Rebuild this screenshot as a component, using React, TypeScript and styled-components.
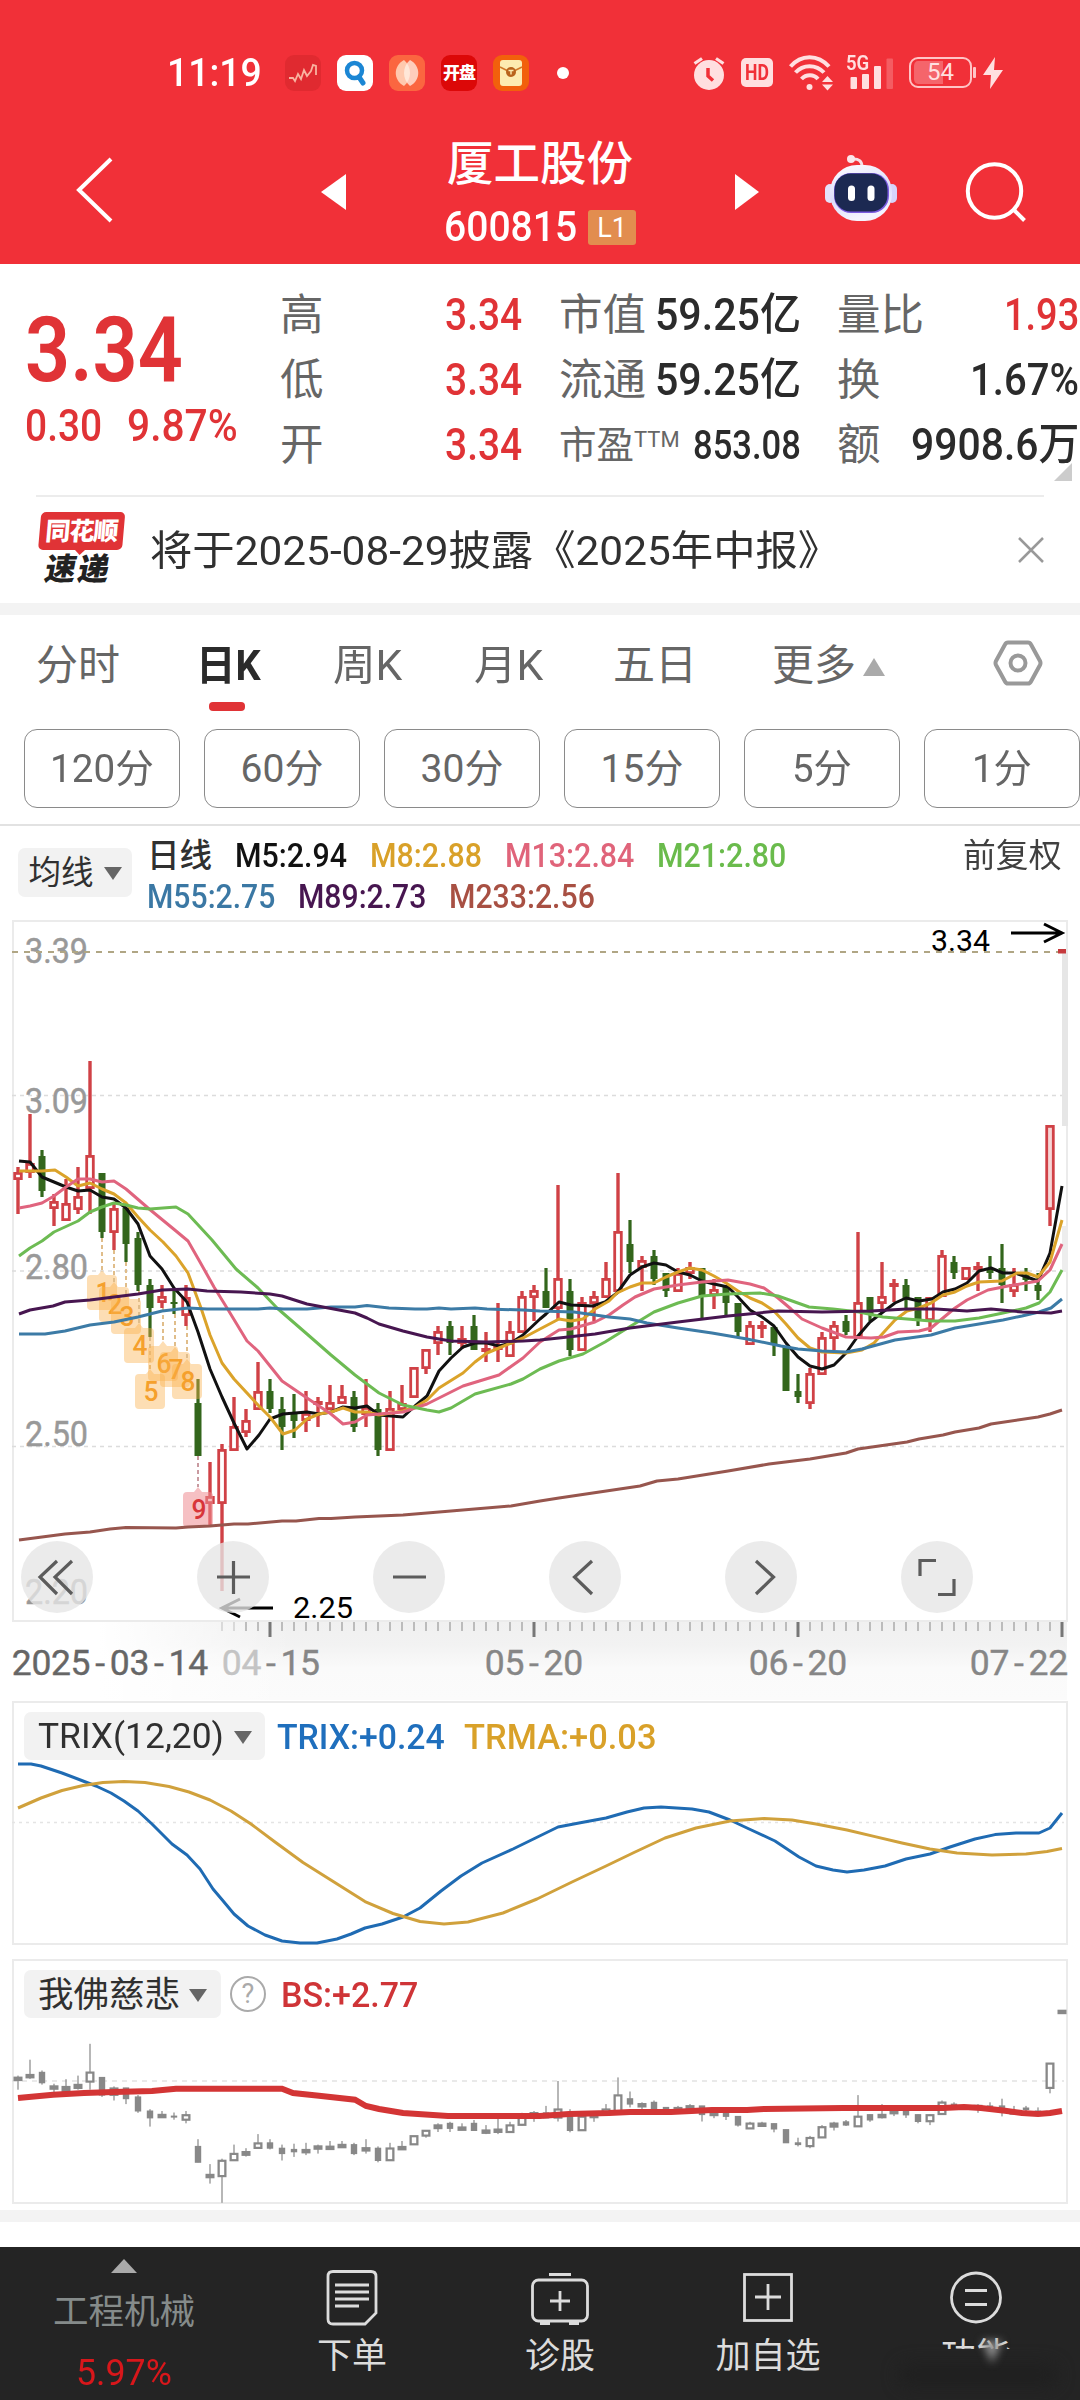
import React, { useLayoutEffect, useRef, useState } from "react";
import styled, { createGlobalStyle } from "styled-components";

const FONT = `Roboto, "Noto Sans CJK SC", sans-serif`;
const RED = "#e03336";

const GlobalStyle = createGlobalStyle`
  * { box-sizing: border-box; }
  html, body { margin: 0; padding: 0; background: #fff; }
  body { width: 1080px; font-family: ${FONT}; color: #303030; overflow-x: hidden; }
  svg { display: block; }
`;

/* ---------- text squeezed to a fixed width, like a condensed DIN face ---------- */

const FitBox = styled.span<{ $w: number }>`
  display: block;
  flex: none;
  width: ${(p) => p.$w}px;
  white-space: nowrap;
`;
const FitInner = styled.span`
  display: inline-block;
  transform-origin: 0 50%;
`;

function Fit({ w, children, className }: { w: number; children: React.ReactNode; className?: string }) {
  const ref = useRef<HTMLSpanElement>(null);
  const [scale, setScale] = useState(1);
  useLayoutEffect(() => {
    if (ref.current) setScale(w / ref.current.offsetWidth);
  }, [w]);
  return (
    <FitBox $w={w} className={className}>
      <FitInner ref={ref} style={{ transform: `scaleX(${scale})` }}>
        {children}
      </FitInner>
    </FitBox>
  );
}

/* ---------- page ---------- */

const Page = styled.main`
  width: 1080px;
  height: 2400px;
  display: flex;
  flex-direction: column;
  background: #fff;
  overflow: hidden;
`;

const Header = styled.header`
  height: 264px;
  flex: none;
  background: #f13038;
  color: #fff;
  display: flex;
  flex-direction: column;
`;
const StatusBar = styled.div`
  height: 98px;
  padding: 47px 77px 0 167px;
  display: flex;
  align-items: center;
`;
const Clock = styled(Fit)`
  font-size: 38.5px;
  line-height: 48px;
  font-weight: 500;
`;
const AppIcons = styled.div`
  display: flex;
  gap: 16px;
  margin-left: 23px;
`;
const AppIcon = styled.div<{ $bg: string }>`
  width: 36px;
  height: 36px;
  border-radius: 9px;
  background: ${(p) => p.$bg};
  display: flex;
  align-items: center;
  justify-content: center;
  font-size: 17px;
  font-weight: 900;
  line-height: 36px;
  letter-spacing: -1px;
`;
const MoreDot = styled.i`
  width: 12px;
  height: 12px;
  border-radius: 50%;
  background: #fff;
  margin-left: 28px;
`;
const SystemIcons = styled.div`
  margin-left: auto;
  display: flex;
  align-items: center;
  color: #ffdfe0;
`;
const HdBadge = styled.span`
  width: 32px;
  height: 29px;
  margin: 0 16px;
  border-radius: 5px;
  background: #ffdfe0;
  color: #f13038;
  font-size: 22px;
  font-weight: 700;
  line-height: 29px;
  padding-left: 4px;
`;
const Signal = styled.div`
  position: relative;
  width: 48px;
  height: 36px;
  margin-left: 13px;
`;
const SignalLabel = styled(Fit)`
  position: absolute;
  left: 0;
  top: -2px;
  font-size: 21px;
  font-weight: 600;
  line-height: 20px;
`;
const Battery = styled.span`
  width: 63px;
  height: 31px;
  margin-left: 15px;
  border: 2.5px solid #ffc4c6;
  border-radius: 9px;
  background: linear-gradient(to right, #f5656b 54%, transparent 54%) content-box;
  padding: 2px 3px;
  text-align: center;
  font-size: 24px;
  font-weight: 400;
  line-height: 23px;
`;
const BatteryTip = styled.i`
  width: 3px;
  height: 11px;
  margin: 0 7px 0 1px;
  border-radius: 1px;
  background: #ffc4c6;
`;

const TitleBar = styled.div`
  height: 166px;
  padding: 22px 53px 0 76px;
  display: flex;
  align-items: flex-start;
`;
const BackSlot = styled.div`
  padding-top: 36px;
  width: 244px;
`;
const ArrowSlot = styled.div`
  padding-top: 53px;
  width: 26px;
`;
const TitleBlock = styled.div`
  width: 388px;
  display: flex;
  flex-direction: column;
  align-items: center;
`;
const StockName = styled.h1`
  margin: 0;
  font-size: 46.5px;
  font-weight: 500;
  line-height: 88px;
`;
const CodeRow = styled.div`
  display: flex;
  align-items: center;
  gap: 11px;
  height: 44px;
  margin-top: -3px;
`;
const Code = styled(Fit)`
  font-size: 42px;
  line-height: 44px;
  font-weight: 500;
`;
const LevelBadge = styled.span`
  width: 48px;
  height: 35px;
  border-radius: 3px;
  background: #e28d4f;
  font-size: 27px;
  line-height: 36px;
  text-align: center;
`;
const RobotSlot = styled.div`
  margin-left: 65px;
  padding-top: 35px;
`;
const SearchSlot = styled.div`
  margin-left: auto;
  padding-top: 39px;
`;

/* ---------- quote ---------- */

const Quote = styled.section`
  position: relative;
  height: 231px;
  flex: none;
  display: flex;
  padding-top: 19px;
`;
const PriceBlock = styled.div`
  width: 280px;
  padding: 17px 0 0 25px;
  color: ${RED};
`;
const Price = styled(Fit)`
  font-size: 91px;
  line-height: 100px;
  font-weight: 600;
`;
const ChangeRow = styled.div`
  display: flex;
  gap: 25px;
  margin-top: 3px;
  font-size: 44px;
  line-height: 46px;
  font-weight: 500;
`;
const StatColumn = styled.div<{ $gap: number }>`
  width: 242px;
  margin-right: ${(p) => p.$gap}px;
`;
const StatRow = styled.div`
  height: 65px;
  display: flex;
  align-items: center;
  justify-content: space-between;
  white-space: nowrap;
  line-height: 65px;
`;
const StatLabel = styled.span<{ $size?: number }>`
  font-size: ${(p) => p.$size ?? 43.5}px;
  color: #666;
  sup {
    font-size: 22px;
    line-height: 0;
    vertical-align: 11px;
    font-weight: 400;
  }
`;
const StatValue = styled(Fit)<{ $red?: boolean; $size?: number }>`
  font-size: ${(p) => p.$size ?? 44.5}px;
  font-weight: 500;
  color: ${(p) => (p.$red ? RED : "#2b2b2b")};
`;
const Corner = styled.i`
  position: absolute;
  left: 1054px;
  top: 199px;
  border-left: 18px solid transparent;
  border-bottom: 18px solid #ccc;
`;

const Notice = styled.section`
  height: 108px;
  flex: none;
  margin: 0 36px;
  border-top: 2px solid #ececec;
  display: flex;
  align-items: center;
`;
const NewsLogo = styled.div`
  width: 88px;
  height: 76px;
  display: flex;
  flex-direction: column;
  align-items: center;
  transform: skewX(-5deg);
`;
const NewsTop = styled.span`
  position: relative;
  width: 84px;
  height: 38px;
  border-radius: 5px;
  background: ${RED};
  color: #fff;
  font-size: 25px;
  font-weight: 900;
  letter-spacing: -1px;
  line-height: 39px;
  text-align: center;
  &::after {
    content: "";
    position: absolute;
    left: 36px;
    top: 37px;
    border: 6px solid transparent;
    border-top-color: ${RED};
  }
`;
const NewsBottom = styled.span`
  font-size: 31px;
  font-weight: 900;
  line-height: 40px;
  letter-spacing: 2px;
  color: #222;
  transform: skewX(-6deg);
`;
const NoticeText = styled(Fit)`
  margin-left: 26px;
  font-size: 41px;
  line-height: 58px;
  padding-top: 2px;
  color: #303030;
`;
const CloseSlot = styled.div`
  margin-left: auto;
`;
const Band = styled.div`
  height: 12px;
  flex: none;
  background: #f3f3f3;
`;

/* ---------- tabs ---------- */

const Tabs = styled.nav`
  height: 105px;
  flex: none;
  padding: 16px 37px 0 36px;
  display: grid;
  grid-template-columns: 160px 137px 141px 139px 159px 1fr 50px;
  align-items: start;
`;
const TabItem = styled.div<{ $active?: boolean }>`
  font-size: 42px;
  line-height: 69px;
  font-weight: ${(p) => (p.$active ? 700 : 400)};
  color: ${(p) => (p.$active ? "#2b2b2b" : "#666")};
`;
const TabMark = styled.i`
  display: block;
  width: 36px;
  height: 9px;
  margin: 2px 0 0 13px;
  border-radius: 4px;
  background: ${RED};
`;
const MoreTriangle = styled.i`
  display: inline-block;
  margin: 0 0 4px 7px;
  border: 11px solid transparent;
  border-top: 0;
  border-bottom: 18px solid #aaa;
`;
const SettingSlot = styled.div`
  padding-top: 9px;
`;
const Periods = styled.div`
  height: 106px;
  flex: none;
  padding: 9px 0 0 24px;
  display: flex;
  gap: 24px;
  border-bottom: 2px solid #e2e2e2;
`;
const Period = styled.button`
  width: 156px;
  height: 79px;
  flex: none;
  padding: 0;
  border: 1.5px solid #8a8a8a;
  border-radius: 13px;
  background: #fff;
  font: 400 39px/79px ${FONT};
  color: #666;
  display: flex;
  justify-content: center;
`;

/* ---------- legend ---------- */

const Legend = styled.section`
  height: 94px;
  flex: none;
  padding-left: 18px;
  display: flex;
`;
const Chip = styled.div<{ $w: number; $h: number; $size: number; $gap?: number }>`
  width: ${(p) => p.$w}px;
  height: ${(p) => p.$h}px;
  flex: none;
  border-radius: 7px;
  background: #f2f2f2;
  display: flex;
  align-items: center;
  justify-content: center;
  gap: ${(p) => p.$gap ?? 10}px;
  font-size: ${(p) => p.$size}px;
  line-height: ${(p) => p.$h}px;
  padding-top: 2px;
  white-space: nowrap;
  color: #303030;
`;
const ChipSlot = styled.div`
  padding-top: 22px;
  width: 129px;
`;
const Down = styled.i`
  border: 9px solid transparent;
  border-bottom: 0;
  border-top: 13px solid #666;
`;
const LegendRows = styled.div`
  padding-top: 10px;
  flex: 1;
`;
const LegendRow = styled.div`
  height: 41px;
  display: flex;
  gap: 23px;
  font-size: 32.5px;
  font-weight: 500;
  line-height: 41px;
`;
const LegendItem = styled(Fit)<{ $c: string }>`
  color: ${(p) => p.$c};
`;
const Adjust = styled(Fit)`
  margin: 0 18px 0 auto;
  font-weight: 400;
  color: #404040;
`;

/* ---------- charts ---------- */

const ChartArea = styled.section`
  position: relative;
  height: 781px;
  flex: none;
`;
const Controls = styled.div`
  position: absolute;
  left: 21px;
  top: 621px;
  display: flex;
  gap: 104px;
`;
const RoundButton = styled.button`
  width: 72px;
  height: 72px;
  padding: 0;
  border: 0;
  border-radius: 50%;
  background: rgba(230, 230, 230, 0.78);
  display: flex;
  align-items: center;
  justify-content: center;
`;
const Panel = styled.section<{ $h: number }>`
  position: relative;
  height: ${(p) => p.$h}px;
  flex: none;
  margin: 0 12px;
  border: 2px solid #ebebeb;
`;
const PanelHead = styled.div`
  position: relative;
  z-index: 1;
  display: flex;
  align-items: center;
  padding: 9px 0 0 10px;
  height: 57px;
`;
const PanelValue = styled(Fit)<{ $c: string; $ml: number }>`
  color: ${(p) => p.$c};
  margin-left: ${(p) => p.$ml}px;
  padding-top: 2px;
  font-size: 35px;
  line-height: 47px;
  font-weight: 500;
`;
const Plot = styled.svg`
  position: absolute;
  left: -14px;
  top: -2px;
`;
const Help = styled.span`
  width: 36px;
  height: 36px;
  margin-left: 9px;
  border: 2.5px solid #aaa;
  border-radius: 50%;
  color: #aaa;
  font-size: 27px;
  line-height: 32px;
  text-align: center;
`;
const Spacer = styled.div<{ $h: number }>`
  height: ${(p) => p.$h}px;
  flex: none;
`;

/* ---------- bottom bar ---------- */

const BottomBar = styled.footer`
  height: 153px;
  flex: none;
  background: #242424;
  display: grid;
  grid-template-columns: 248px repeat(4, 208px);
  position: relative;
`;
const Sector = styled.div`
  display: flex;
  flex-direction: column;
  align-items: center;
  padding-top: 12px;
`;
const UpMark = styled.i`
  border: 13px solid transparent;
  border-top: 0;
  border-bottom: 14px solid #aaa;
`;
const SectorName = styled.span`
  margin-top: 15px;
  font-size: 35.5px;
  line-height: 48px;
  color: #858b8a;
`;
const SectorChange = styled(Fit)`
  margin-top: 13px;
  font-size: 36.5px;
  line-height: 48px;
  color: #d8171b;
`;
const Action = styled.div`
  display: flex;
  flex-direction: column;
  align-items: center;
  padding-top: 20px;
`;
const ActionLabel = styled.span`
  margin-top: 4px;
  font-size: 35px;
  line-height: 48px;
  color: #dcdcdc;
`;
const Smudge = styled.div`
  position: absolute;
  left: 880px;
  top: 102px;
  width: 196px;
  height: 48px;
  background: #242424;
  &::before {
    content: "";
    position: absolute;
    left: 18px;
    top: 14px;
    width: 160px;
    height: 24px;
    border-radius: 12px;
    background: #202020;
    filter: blur(8px);
  }
  &::after {
    content: "";
    position: absolute;
    left: 102px;
    top: -8px;
    border: 10px solid transparent;
    border-bottom: 0;
    border-top: 22px solid #8f8f8f;
    filter: blur(4px);
  }
`;

/* ---------- data: rising flag, high, body top, body bottom, low (pixel rows) ---------- */

type Candle = [0 | 1, number, number, number, number];
const candles: Candle[] = [
  [1, 1167, 1172, 1180, 1214], [1, 1114, 1163, 1173, 1178], [0, 1150, 1156, 1191, 1197], [1, 1194, 1201, 1209, 1226],
  [1, 1179, 1203, 1221, 1221], [1, 1167, 1196, 1210, 1214], [1, 1061, 1155, 1189, 1214], [0, 1173, 1173, 1232, 1238],
  [1, 1203, 1208, 1233, 1250], [0, 1208, 1208, 1244, 1262], [0, 1232, 1238, 1285, 1291], [0, 1279, 1285, 1308, 1337],
  [1, 1285, 1296, 1303, 1308], [0, 1290, 1302, 1304, 1314], [1, 1285, 1297, 1316, 1326], [0, 1379, 1403, 1456, 1456],
  [1, 1462, 1496, 1504, 1527], [1, 1444, 1449, 1504, 1591], [1, 1397, 1426, 1451, 1451], [1, 1409, 1420, 1433, 1437],
  [1, 1362, 1391, 1410, 1410], [0, 1379, 1391, 1409, 1413], [0, 1397, 1409, 1427, 1450], [0, 1394, 1413, 1421, 1438],
  [1, 1391, 1413, 1421, 1432], [1, 1397, 1401, 1405, 1427], [1, 1385, 1402, 1410, 1410], [1, 1385, 1396, 1404, 1404],
  [0, 1391, 1397, 1427, 1432], [1, 1379, 1407, 1415, 1427], [0, 1403, 1409, 1450, 1456], [1, 1391, 1408, 1451, 1451],
  [1, 1385, 1403, 1410, 1410], [1, 1368, 1367, 1398, 1398], [1, 1350, 1349, 1369, 1374], [1, 1326, 1331, 1344, 1355],
  [0, 1321, 1326, 1343, 1355], [1, 1326, 1338, 1344, 1349], [0, 1315, 1326, 1350, 1350], [1, 1332, 1348, 1352, 1362],
  [1, 1303, 1345, 1350, 1362], [1, 1321, 1331, 1357, 1357], [1, 1291, 1296, 1333, 1333], [1, 1285, 1290, 1298, 1321],
  [0, 1268, 1291, 1308, 1308], [1, 1185, 1278, 1309, 1320], [0, 1279, 1291, 1350, 1356], [1, 1297, 1302, 1351, 1351],
  [1, 1291, 1296, 1304, 1321], [1, 1262, 1278, 1298, 1298], [1, 1173, 1231, 1292, 1292], [0, 1220, 1244, 1262, 1273],
  [1, 1256, 1260, 1268, 1291], [0, 1250, 1256, 1279, 1285], [0, 1273, 1273, 1291, 1297], [1, 1268, 1273, 1292, 1292],
  [1, 1262, 1267, 1274, 1279], [0, 1268, 1268, 1297, 1320], [1, 1279, 1289, 1296, 1309], [0, 1285, 1285, 1303, 1315],
  [0, 1303, 1303, 1332, 1337], [1, 1321, 1325, 1345, 1345], [1, 1321, 1325, 1329, 1338], [0, 1327, 1327, 1345, 1356],
  [0, 1347, 1347, 1391, 1391], [0, 1374, 1391, 1397, 1403], [1, 1368, 1373, 1404, 1409], [1, 1332, 1337, 1375, 1375],
  [1, 1321, 1325, 1339, 1350], [0, 1315, 1321, 1332, 1335], [1, 1232, 1302, 1338, 1338], [0, 1297, 1297, 1315, 1321],
  [1, 1262, 1296, 1304, 1310], [1, 1279, 1283, 1287, 1302], [0, 1279, 1285, 1298, 1308], [0, 1297, 1297, 1320, 1326],
  [1, 1297, 1297, 1321, 1332], [1, 1250, 1255, 1297, 1297], [0, 1256, 1262, 1273, 1279], [1, 1267, 1267, 1280, 1280],
  [1, 1262, 1266, 1270, 1291], [0, 1256, 1268, 1273, 1279], [0, 1244, 1268, 1285, 1303], [1, 1268, 1284, 1292, 1297],
  [0, 1268, 1275, 1280, 1291], [0, 1273, 1285, 1291, 1300], [1, 1125, 1125, 1210, 1226], [1, 949, 949, 953, 953],
];

const lines: [string, string][] = [
  ["#97564e", "19,1540 65,1534 90,1532 110,1529 126,1527.5 176,1528 188,1527 210,1526 234,1524 248,1524 282,1521 296,1521 319,1518.5 331,1518.5 355,1517 403,1515 451,1511 511,1506 540,1501 559,1498 640,1486 657,1481 678,1479 728,1471 769,1464 810,1459 846,1453 858,1449 907,1442 919,1439 943,1435 955,1432 979,1428 991,1424 1038,1417 1050,1414 1062,1410"],
  ["#111", "19,1161 30,1162 42,1177 54,1182 66,1187 78,1191 90,1190 102,1197 114,1199 126,1208 138,1224 150,1256 162,1269 174,1288 187,1302 198,1332 210,1369 222,1397 234,1423 247,1449 259,1435 270,1419 283,1414 307,1412 319,1414 331,1412 343,1407 355,1408 367,1406 379,1415 403,1417 415,1406 427,1396 439,1371 451,1358 463,1347 475,1343 487,1343 499,1346 511,1343 523,1335 540,1319 546,1314 559,1302 571,1305 593,1306 605,1302 617,1293 630,1275 642,1267 654,1263 666,1265 678,1272 690,1275 702,1281 714,1284 728,1287 738,1297 750,1310 762,1317 774,1326 786,1343 798,1357 810,1366 822,1369 834,1365 846,1353 858,1336 870,1322 883,1312 895,1303 906,1298 919,1301 932,1299 943,1292 955,1289 967,1283 979,1271 991,1268 1003,1273 1015,1273 1027,1277 1038,1281 1050,1253 1062,1186"],
  ["#dba32a", "19,1171 42,1171 55,1170 66,1177 78,1186 90,1183 102,1189 114,1194 126,1203 138,1217 150,1230 163,1242 176,1256 188,1273 201,1308 210,1335 222,1363 234,1379 258,1405 270,1417 283,1434 295,1430 307,1419 319,1414 331,1412 343,1408 355,1412 367,1412 379,1415 403,1411 415,1407 427,1400 439,1388 463,1373 475,1362 487,1353 499,1348 523,1338 540,1329 559,1319 571,1321 583,1319 595,1309 609,1301 617,1293 630,1287 642,1283 654,1283 666,1277 678,1272 690,1268 702,1270 714,1276 726,1283 738,1291 750,1298 762,1303 774,1311 786,1324 798,1338 810,1348 822,1352 846,1353 862,1350 874,1343 884,1332 895,1320 907,1311 919,1308 931,1303 943,1295 955,1292 967,1286 979,1282 1002,1281 1017,1273 1027,1273 1038,1277 1050,1262 1062,1220"],
  ["#e0647e", "19,1208 30,1206 42,1203 54,1196 66,1187 78,1179 90,1179 102,1182 114,1181 126,1189 148,1208 176,1231 188,1241 200,1262 214,1287 227,1308 247,1341 258,1351 282,1381 307,1398 331,1414 343,1424 355,1422 367,1415 403,1412 427,1404 463,1386 499,1375 523,1358 540,1342 559,1330 571,1329 595,1322 609,1315 623,1305 635,1297 654,1289 678,1285 702,1282 728,1280 750,1284 764,1288 778,1298 791,1309 802,1319 822,1328 846,1337 871,1338 884,1337 898,1332 919,1331 931,1328 943,1318 955,1308 967,1300 988,1290 1008,1286 1038,1281 1050,1270 1062,1244"],
  ["#6dbb53", "19,1256 30,1248 42,1241 54,1232 78,1221 90,1212 102,1207 114,1203 126,1205 138,1208 150,1209 176,1207 188,1214 212,1240 236,1269 258,1288 277,1308 307,1334 331,1355 355,1375 379,1393 403,1405 427,1410 439,1412 451,1408 475,1394 511,1384 523,1379 540,1369 559,1361 583,1354 605,1342 626,1329 654,1312 678,1303 702,1296 728,1294 760,1293 778,1296 795,1302 809,1307 833,1309 859,1312 883,1317 907,1319 931,1321 955,1321 979,1318 1003,1313 1026,1308 1039,1303 1050,1292 1062,1270"],
  ["#3c7ba6", "19,1334 45,1334 65,1331 90,1325 114,1322 138,1317 162,1311 188,1308 207,1309 258,1309 270,1308 283,1309 307,1309 331,1307 355,1307 367,1305.5 389,1308 415,1309 427,1309 439,1308 451,1309 475,1308 487,1309 523,1310 540,1311 574,1312 609,1317 630,1319 647,1323 678,1328 712,1333 747,1339 781,1346 798,1349 822,1351 846,1352 862,1349 895,1340 931,1335 955,1328 979,1324 1003,1320 1022,1316 1039,1312 1051,1308 1062,1299"],
  ["#471650", "19,1314 30,1310 53,1306 65,1302 90,1300 138,1294 162,1290 188,1289 207,1291 241,1292 270,1294 282,1296 307,1304 355,1313 367,1318 379,1324 403,1331 427,1337 451,1341 487,1342 523,1341 540,1340 559,1338 595,1334 630,1328 678,1322 728,1316 778,1311 822,1312 871,1311 907,1309 936,1309 967,1311 991,1309 1022,1312 1051,1313 1062,1311"],
];

const marks: [number, number, number, number][] = [
  [1, 102, 1292, 1238], [2, 114, 1304, 1250], [3, 126, 1316, 1262], [4, 139, 1345, 1291],
  [5, 150, 1391, 1337], [6, 163, 1363, 1308], [7, 175, 1369, 1314], [8, 187, 1381, 1326], [9, 198, 1509, 1456],
];

function Label({ x, y, w, size, fill, weight = 400, children }: {
  x: number; y: number; w: number; size: number; fill: string; weight?: number; children: string;
}) {
  return (
    <text x={x} y={y} textLength={w} lengthAdjust="spacingAndGlyphs" fontSize={size} fill={fill} fontWeight={weight} fontFamily={FONT}>
      {children}
    </text>
  );
}

/* date text on the time axis: every character gets an equal cell */
function AxisDate({ x, fill, children }: { x: number; fill: string; children: string }) {
  const xs = children.split("").map((_, i) => x + i * 19.6 + 9.8).join(" ");
  return (
    <text x={xs} y={1675} textAnchor="middle" fontSize={35.5} fill={fill} stroke={fill} strokeWidth="0.4" fontFamily={FONT}>
      {children}
    </text>
  );
}

function CandleChart() {
  const ticks = Array.from({ length: 71 }, (_, i) => 222 + i * 12);
  return (
    <svg width="1080" height="780" viewBox="0 920 1080 780">
      <defs>
        <linearGradient id="axisX" x1="0" x2="1" y1="0" y2="0">
          <stop offset="0" stopColor="#fff" />
          <stop offset="0.2" stopColor="#fff" stopOpacity="0" />
        </linearGradient>
        <linearGradient id="axisY" x1="0" x2="0" y1="0" y2="1">
          <stop offset="0" stopColor="#f0f0f0" />
          <stop offset="0.3" stopColor="#f2f2f2" />
          <stop offset="0.6" stopColor="#fafafa" />
          <stop offset="1" stopColor="#fbfbfb" />
        </linearGradient>
      </defs>
      <rect x="100" y="1621" width="967" height="79" fill="url(#axisY)" />
      <rect x="99" y="1620" width="969" height="80" fill="url(#axisX)" />
      <rect x="13" y="921" width="1054" height="700" fill="none" stroke="#ebebeb" strokeWidth="2" />
      {[1095.5, 1271, 1446.5].map((y) => (
        <line key={y} x1="12" x2="1064" y1={y} y2={y} stroke="#dcdcdc" strokeWidth="1.5" strokeDasharray="4 4" />
      ))}
      <g stroke="#999" strokeWidth="0.5">
        <Label x={25} y={963} w={63} size={35.5} fill="#999">3.39</Label>
        <Label x={25} y={1113} w={63} size={35.5} fill="#999">3.09</Label>
        <Label x={25} y={1279} w={63} size={35.5} fill="#999">2.80</Label>
        <Label x={25} y={1446} w={63} size={35.5} fill="#999">2.50</Label>
        <Label x={25} y={1604} w={63} size={35.5} fill="#999">2.20</Label>
      </g>
      <line x1="12" x2="1064" y1="952" y2="952" stroke="#b0a684" strokeWidth="2" strokeDasharray="6 6" />
      <rect x="1062" y="953" width="6" height="173" fill="#e6e6e6" />
      <rect x="1062" y="1226" width="6" height="46" fill="#ededed" />
      {candles.map(([up, h, t, b, l], i) => {
        const x = 18 + i * 12;
        if (i === 87) return <rect key={i} x="1058" y="949" width="8" height="4.5" fill="#c63a3d" />;
        return up ? (
          <g key={i} stroke="#d04146" fill={i === 86 ? "#f6d5d5" : "#fff"}>
            {h < t && <line x1={x} x2={x} y1={h} y2={t} strokeWidth="3.4" />}
            {l > b && <line x1={x} x2={x} y1={b} y2={l} strokeWidth="3.4" />}
            <rect x={x - 3.3} y={t + 1.4} width="6.6" height={Math.max(1, b - t - 2.8)} strokeWidth="2.8" />
          </g>
        ) : (
          <g key={i} fill="#33661c">
            <rect x={x - 1.6} y={h} width="3.2" height={l - h} />
            <rect x={x - 3.5} y={t} width="7" height={b - t} />
          </g>
        );
      })}
      {marks.map(([n, x, y, from]) => {
        const hot = n === 9;
        return (
          <g key={n}>
            <line x1={x} x2={x} y1={from} y2={y - 22} stroke={hot ? "#c99aa0" : "#e0bd8a"} strokeWidth="2" strokeDasharray="4 3" />
            <path
              d={`M${x - 15} ${y - 13}q0-4 4-4h7l4-5 4 5h7q4 0 4 4v27q0 4-4 4h-22q-4 0-4-4z`}
              fill={hot ? "#ef8d92" : "#fbb04c"}
              fillOpacity={hot ? 0.55 : 0.42}
            />
            <Label x={x - 6.5} y={y + 10} w={15} size={27} fill={hot ? "#d8353a" : "#f5a02c"} weight={500}>{String(n)}</Label>
          </g>
        );
      })}
      {lines.map(([c, pts]) => (
        <polyline key={c} points={pts} fill="none" stroke={c} strokeWidth="3" strokeLinejoin="round" />
      ))}
      <Label x={931} y={951} w={59} size={29} fill="#000">3.34</Label>
      <path d="M1011 933H1062M1044 924L1062 933L1044 942" fill="none" stroke="#000" strokeWidth="3" />
      <Label x={293} y={1618} w={60} size={30} fill="#000">2.25</Label>
      <path d="M273 1608H222M240 1599L222 1608L240 1617" fill="none" stroke="#000" strokeWidth="3" />
      {ticks.map((x, i) => (
        <line key={x} x1={x} x2={x} y1="1622" y2="1631" stroke="#999" strokeWidth="1.2" opacity={i < 2 ? 0.5 : 1} />
      ))}
      {[270, 534, 798, 1062].map((x) => (
        <line key={x} x1={x} x2={x} y1="1622" y2="1637" stroke="#777" strokeWidth="3" />
      ))}
      <AxisDate x={12} fill="#666">2025-03-14</AxisDate>
      <AxisDate x={222} fill="#c4c4c4">04</AxisDate>
      <AxisDate x={261} fill="#868686">-15</AxisDate>
      <AxisDate x={485} fill="#868686">05-20</AxisDate>
      <AxisDate x={749} fill="#868686">06-20</AxisDate>
      <AxisDate x={970} fill="#868686">07-22</AxisDate>
    </svg>
  );
}

const trixBlue =
  "18,1764 31,1764 41,1766 62,1773 83,1781 96,1786 111,1793 124,1801 138,1811 152,1824 172,1844 187,1855 200,1869 213,1889 224,1902 234,1914 248,1926 265,1935 282,1941 300,1943 317,1943 337,1939 351,1934 365,1928 382,1924 403,1917 420,1908 441,1891 461,1876 482,1863 513,1849 558,1827 579,1823 606,1818 627,1812 644,1808 661,1807 692,1809 709,1812 730,1820 747,1828 775,1841 799,1857 816,1866 833,1870 847,1872 864,1870 885,1866 906,1859 930,1854 950,1847 975,1839 995,1834.6 1016,1833 1039,1833 1050,1828 1062,1813";
const trixGold =
  "18,1808 41,1798 62,1790.5 83,1785.5 103,1782.5 124,1781.5 145,1782.5 169,1786.5 189,1792 210,1800 231,1811 251,1824 275,1842 303,1862.5 334,1882 365,1901.6 393,1913.5 420,1921.5 444,1924 468,1922 503,1913 537,1899 572,1882 606,1866 634,1852.5 665,1838 696,1828 730,1821 764,1818.5 792,1820 816,1824 847,1830 875,1836.6 902,1843 930,1849 957,1853 992,1855 1026,1854 1047,1851.5 1062,1848.5";
const bsLine =
  "18,2098 53,2094.7 84,2093 114,2092 152,2091 176,2088.7 282,2088.7 293,2093 319,2095.7 355,2099.7 366,2106 379,2109 403,2113 448,2116 540,2116 569,2114 609,2113 630,2112 671,2112 712,2110 747,2110 764,2109 843,2108 943,2108 964,2107 981,2108 1005,2110.7 1022,2113 1038,2114 1050,2113 1062,2111";

const toBs = (y: number) => 2063 + (y - 1125) * 0.3;

function BsPlot() {
  return (
    <Plot width="1080" height="244" viewBox="0 1959 1080 244">
      <line x1="12" x2="1064" y1="2081" y2="2081" stroke="#e2e2e2" strokeWidth="1.5" strokeDasharray="5 5" />
      {candles.map(([up, h, t, b, l], i) => {
        const x = 18 + i * 12;
        const top = toBs(t) - 0.5;
        const height = Math.max(up ? 4.5 : 2, toBs(b) - toBs(t) + 1);
        return (
          <g key={i} fill="#888">
            <rect x={x - 0.6} y={toBs(h)} width="1.2" height={toBs(l) - toBs(h)} />
            <rect x={x - (up ? 4.5 : 3.2)} y={top} width={up ? 9 : 6.4} height={height} />
            {up && height > 6.5 && <rect x={x - 2.2} y={top + 2.2} width="4.4" height={height - 4.4} fill="#fff" />}
          </g>
        );
      })}
      <polyline points={bsLine} fill="none" stroke="#d33535" strokeWidth="6" />
    </Plot>
  );
}

/* ---------- icons ---------- */

const Robot = () => (
  <svg width="72" height="67" viewBox="0 0 72 67">
    <defs>
      <linearGradient id="shell" x1="0" x2="0.3" y1="0" y2="1">
        <stop offset="0" stopColor="#fff" />
        <stop offset="0.6" stopColor="#dcdcfa" />
        <stop offset="1" stopColor="#f4f4ff" />
      </linearGradient>
    </defs>
    <path d="M37 12C37 6 34 3.500 27 4" fill="none" stroke="#f6dfe6" strokeWidth="3" strokeLinecap="round" />
    <circle cx="26" cy="4" r="4" fill="#fbe6ea" />
    <rect x="0" y="29" width="10" height="19" rx="5" fill="#e4e2fb" />
    <rect x="62" y="29" width="10" height="19" rx="5" fill="#d6d4fa" />
    <rect x="5" y="10" width="62" height="56" rx="27" fill="url(#shell)" />
    <rect x="9" y="18" width="55" height="40" rx="17" fill="#7a5be0" />
    <rect x="9.500" y="18.500" width="53" height="38" rx="16" fill="#1c2952" />
    <rect x="23" y="30.500" width="7" height="15.500" rx="3.500" fill="#fff" />
    <rect x="42.500" y="30.500" width="7" height="15.500" rx="3.500" fill="#fff" />
  </svg>
);

const ctl = { fill: "none", stroke: "#5c5c5c", strokeWidth: 3.2 };
const controlPaths = [
  "M36 20L19 36L36 53M51 20L34 36L51 53",
  "M20 36H53M36.5 20V53",
  "M20 36H53",
  "M43 20L25.5 36L43 53",
  "M31 20L48.500 36L31 53",
  "M19 35V19.500H35M53 38V53.500H37",
];

export default function App() {
  return (
    <>
      <GlobalStyle />
      <Page>
        <Header>
          <StatusBar>
            <Clock w={95}>11:19</Clock>
            <AppIcons>
              <AppIcon $bg="#e02a30">
                <svg width="32" height="24" viewBox="0 0 32 24" fill="none" stroke="#f9b3a0" strokeWidth="1.8">
                  <path d="M2 17h4l2 3 3-7 3 5 3-9 3 6 4-5 2-6 3 1v9" />
                </svg>
              </AppIcon>
              <AppIcon $bg="#fff">
                <svg width="26" height="28" viewBox="0 0 26 28" fill="none" stroke="#1b86d4">
                  <circle cx="12.500" cy="11.500" r="7.500" strokeWidth="4.500" />
                  <path d="M17 18l4 6" strokeWidth="5" strokeLinecap="round" />
                </svg>
              </AppIcon>
              <AppIcon $bg="#fb6640">
                <svg width="28" height="28" viewBox="0 0 28 28">
                  <path d="M11 1C0 7 0 21 11 27C19 20 19 8 11 1z" fill="#ffc9ae" />
                  <path d="M17 1C28 7 28 21 17 27C9 20 9 8 17 1z" fill="#fff0e6" fillOpacity=".75" />
                </svg>
              </AppIcon>
              <AppIcon $bg="#dc0808">开盘</AppIcon>
              <AppIcon $bg="#f2600c">
                <svg width="24" height="28" viewBox="0 0 24 28">
                  <rect x="1" y="1" width="22" height="26" rx="3" fill="#fdebb0" />
                  <path d="M1 8L9 12M23 8L15 12" stroke="#d07a2a" strokeWidth="1.600" />
                  <circle cx="12" cy="13" r="5" fill="#b9631b" />
                  <path d="M9.500 11.500h5M12 11.500v4" stroke="#fdebb0" strokeWidth="1.400" />
                </svg>
              </AppIcon>
            </AppIcons>
            <MoreDot />
            <SystemIcons>
              <svg width="32" height="36" viewBox="0 0 32 36">
                <circle cx="16" cy="20" r="15" fill="#ffdfe0" />
                <path d="M15 13v8l5 4.500" stroke="#f13038" strokeWidth="3.500" fill="none" />
                <path d="M1.500 8.500L9 3.500M30.500 8.500L23 3.500" stroke="#ffdfe0" strokeWidth="3.200" />
              </svg>
              <HdBadge><Fit w={24}>HD</Fit></HdBadge>
              <svg width="44" height="36" viewBox="0 0 44 36" fill="none" stroke="#ffdfe0" strokeWidth="4">
                <path d="M1.500 11.500C12-1 29-1 40 11.500" />
                <path d="M6.500 17.500C14 9 27 9 35 17.500" />
                <path d="M12.500 24C17 19 25 19 29 24" />
                <circle cx="20.500" cy="32" r="3" fill="#ffdfe0" stroke="none" />
                <path d="M33 27l5.500-6 5.500 6zM33 29.500l5.500 6 5.500-6z" fill="#ffdfe0" stroke="none" />
              </svg>
              <Signal>
                <svg width="48" height="36" viewBox="0 0 48 36" fill="#ffdfe0">
                  <rect x="4.500" y="22" width="6.500" height="12" rx="1" />
                  <rect x="16" y="19" width="7" height="15" rx="1" />
                  <rect x="28" y="11" width="7" height="23" rx="1" />
                  <rect x="40.500" y="3.500" width="6.500" height="30.500" rx="1" fillOpacity=".25" />
                </svg>
                <SignalLabel w={23}>5G</SignalLabel>
              </Signal>
              <Battery>54</Battery>
              <BatteryTip />
              <svg width="20" height="32" viewBox="0 0 20 32" fill="#ffdfe0">
                <path d="M12 0L0 18H8L7 32L20 13H11z" />
              </svg>
            </SystemIcons>
          </StatusBar>
          <TitleBar>
            <BackSlot>
              <svg width="38" height="68" viewBox="0 0 38 68" fill="none" stroke="#fff" strokeWidth="4">
                <path d="M35 3L3 34L35 65" />
              </svg>
            </BackSlot>
            <ArrowSlot>
              <svg width="26" height="38" viewBox="0 0 26 38" fill="#fff"><path d="M26 1V37L1 19z" /></svg>
            </ArrowSlot>
            <TitleBlock>
              <StockName>厦工股份</StockName>
              <CodeRow>
                <Code w={133}>600815</Code>
                <LevelBadge>L1</LevelBadge>
              </CodeRow>
            </TitleBlock>
            <ArrowSlot>
              <svg width="26" height="38" viewBox="0 0 26 38" fill="#fff"><path d="M1 1V37L25 19z" /></svg>
            </ArrowSlot>
            <RobotSlot><Robot /></RobotSlot>
            <SearchSlot>
              <svg width="62" height="64" viewBox="0 0 62 64" fill="none" stroke="#fff" strokeWidth="4">
                <circle cx="29.500" cy="32" r="26.700" />
                <path d="M48 50L59.500 61.500" />
              </svg>
            </SearchSlot>
          </TitleBar>
        </Header>

        <Quote>
          <PriceBlock>
            <Price w={158}>3.34</Price>
            <ChangeRow>
              <Fit w={77}>0.30</Fit>
              <Fit w={111}>9.87%</Fit>
            </ChangeRow>
          </PriceBlock>
          <StatColumn $gap={37}>
            {["高", "低", "开"].map((l) => (
              <StatRow key={l}>
                <StatLabel>{l}</StatLabel>
                <StatValue w={77} $red>3.34</StatValue>
              </StatRow>
            ))}
          </StatColumn>
          <StatColumn $gap={36}>
            <StatRow><StatLabel>市值</StatLabel><StatValue w={146}>59.25亿</StatValue></StatRow>
            <StatRow><StatLabel>流通</StatLabel><StatValue w={146}>59.25亿</StatValue></StatRow>
            <StatRow><StatLabel $size={37.5}>市盈<sup>TTM</sup></StatLabel><StatValue w={108} $size={40}>853.08</StatValue></StatRow>
          </StatColumn>
          <StatColumn $gap={0}>
            <StatRow><StatLabel>量比</StatLabel><StatValue w={75} $red>1.93</StatValue></StatRow>
            <StatRow><StatLabel>换</StatLabel><StatValue w={109}>1.67%</StatValue></StatRow>
            <StatRow><StatLabel>额</StatLabel><StatValue w={168}>9908.6万</StatValue></StatRow>
          </StatColumn>
          <Corner />
        </Quote>

        <Notice>
          <NewsLogo>
            <NewsTop>同花顺</NewsTop>
            <NewsBottom>速递</NewsBottom>
          </NewsLogo>
          <NoticeText w={690}>将于2025-08-29披露《2025年中报》</NoticeText>
          <CloseSlot>
            <svg width="26" height="26" viewBox="0 0 26 26" stroke="#999" strokeWidth="2.500">
              <path d="M1 1L25 25M25 1L1 25" />
            </svg>
          </CloseSlot>
        </Notice>
        <Band />

        <Tabs>
          <TabItem>分时</TabItem>
          <TabItem $active><Fit w={65}>日K</Fit><TabMark /></TabItem>
          <TabItem><Fit w={69}>周K</Fit></TabItem>
          <TabItem><Fit w={69}>月K</Fit></TabItem>
          <TabItem>五日</TabItem>
          <TabItem>更多<MoreTriangle /></TabItem>
          <SettingSlot>
            <svg width="50" height="46" viewBox="0 0 50 46" fill="none" stroke="#999" strokeWidth="4">
              <path d="M15 2.500H35Q37 2.500 38 4.500L47 21Q48 23 47 25L38 41.500Q37 43.500 35 43.500H15Q13 43.500 12 41.500L3 25Q2 23 3 21L12 4.500Q13 2.500 15 2.500z" />
              <circle cx="25" cy="23" r="7.500" />
            </svg>
          </SettingSlot>
        </Tabs>
        <Periods>
          <Period><Fit w={104}>120分</Fit></Period>
          <Period><Fit w={83}>60分</Fit></Period>
          <Period><Fit w={83}>30分</Fit></Period>
          <Period><Fit w={83}>15分</Fit></Period>
          <Period><Fit w={60}>5分</Fit></Period>
          <Period><Fit w={60}>1分</Fit></Period>
        </Periods>

        <Legend>
          <ChipSlot><Chip $w={114} $h={49} $size={32.5}>均线<Down /></Chip></ChipSlot>
          <LegendRows>
            <LegendRow>
              <LegendItem w={65} $c="#303030">日线</LegendItem>
              <LegendItem w={112} $c="#111">M5:2.94</LegendItem>
              <LegendItem w={112} $c="#d9a129">M8:2.88</LegendItem>
              <LegendItem w={129} $c="#e0647a">M13:2.84</LegendItem>
              <LegendItem w={129} $c="#6abb4c">M21:2.80</LegendItem>
              <Adjust w={99}>前复权</Adjust>
            </LegendRow>
            <LegendRow>
              <LegendItem w={128} $c="#3b78a4">M55:2.75</LegendItem>
              <LegendItem w={128} $c="#471650">M89:2.73</LegendItem>
              <LegendItem w={146} $c="#a85043">M233:2.56</LegendItem>
            </LegendRow>
          </LegendRows>
        </Legend>

        <ChartArea>
          <CandleChart />
          <Controls>
            {controlPaths.map((d) => (
              <RoundButton key={d}>
                <svg width="72" height="72" viewBox="0 0 72 72" {...ctl}><path d={d} /></svg>
              </RoundButton>
            ))}
          </Controls>
        </ChartArea>

        <Panel $h={244}>
          <PanelHead>
            <Chip $w={241} $h={48} $size={35}><Fit w={186}>TRIX(12,20)</Fit><Down /></Chip>
            <PanelValue w={168} $c="#1f6fbd" $ml={12}>TRIX:+0.24</PanelValue>
            <PanelValue w={193} $c="#d9a129" $ml={19}>TRMA:+0.03</PanelValue>
          </PanelHead>
          <Plot width="1080" height="244" viewBox="0 1701 1080 244">
            <line x1="12" x2="1064" y1="1822.500" y2="1822.500" stroke="#e4e4e4" strokeWidth="1.500" strokeDasharray="3 4" />
            <polyline points={trixBlue} fill="none" stroke="#1f6bb3" strokeWidth="3" strokeLinejoin="round" />
            <polyline points={trixGold} fill="none" stroke="#d0a13c" strokeWidth="3" strokeLinejoin="round" />
          </Plot>
        </Panel>
        <Spacer $h={14} />
        <Panel $h={245}>
          <PanelHead>
            <Chip $w={197} $h={48} $size={35.5} $gap={9}>我佛慈悲<Down /></Chip>
            <Help>?</Help>
            <PanelValue w={137} $c="#cf3437" $ml={15}>BS:+2.77</PanelValue>
          </PanelHead>
          <BsPlot />
        </Panel>
        <Spacer $h={6} />
        <Band />
        <Spacer $h={25} />

        <BottomBar>
          <Sector>
            <UpMark />
            <SectorName>工程机械</SectorName>
            <SectorChange w={96}>5.97%</SectorChange>
          </Sector>
          <Action>
            <svg width="58" height="62" viewBox="0 0 58 62" fill="none" stroke="#dcdcdc" strokeWidth="2.800">
              <path d="M10 4.500H48Q53 4.500 53 9.500V46L42 57H10Q5 57 5 52V9.500Q5 4.500 10 4.500z" />
              <path d="M12 18H46M12 25H46M12 32H46M12 39H36" />
            </svg>
            <ActionLabel>下单</ActionLabel>
          </Action>
          <Action>
            <svg width="58" height="62" viewBox="0 0 58 62" fill="none" stroke="#dcdcdc" strokeWidth="2.800">
              <rect x="1.500" y="13" width="55" height="41" rx="6" />
              <path d="M18 7.500H40M29 24V44M19 34H39M9 56.500H19M38 56.500H48" />
            </svg>
            <ActionLabel>诊股</ActionLabel>
          </Action>
          <Action>
            <svg width="58" height="62" viewBox="0 0 58 62" fill="none" stroke="#dcdcdc" strokeWidth="2.800">
              <rect x="5.500" y="7.500" width="47" height="46" />
              <path d="M29 17V43M16 30H42" />
            </svg>
            <ActionLabel>加自选</ActionLabel>
          </Action>
          <Action>
            <svg width="58" height="62" viewBox="0 0 58 62" fill="none" stroke="#dcdcdc" strokeWidth="2.800">
              <circle cx="29" cy="30.500" r="24.500" />
              <path d="M18 23.500H40M18 37.500H40" />
            </svg>
            <ActionLabel>功能</ActionLabel>
          </Action>
          <Smudge />
        </BottomBar>
      </Page>
    </>
  );
}
